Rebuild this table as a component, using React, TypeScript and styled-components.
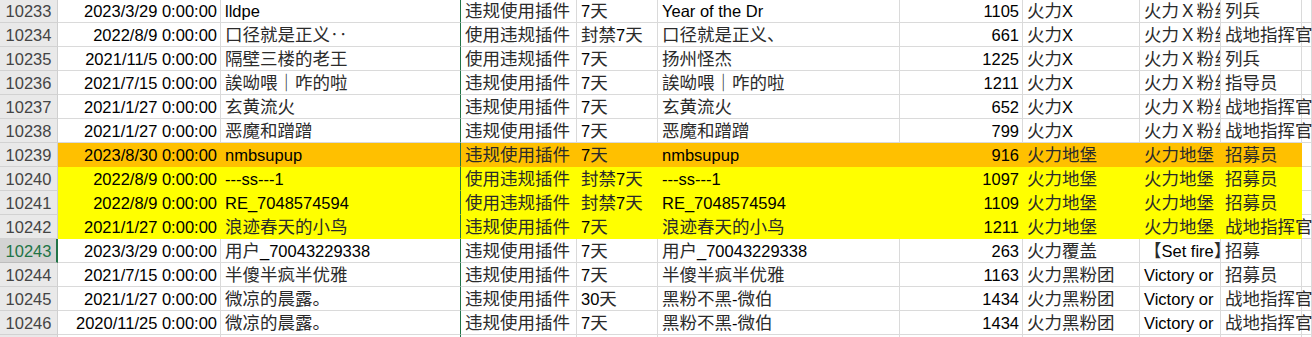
import React from 'react';
import styled, {createGlobalStyle} from 'styled-components';

const GlobalStyle = createGlobalStyle`
    html, body {
        margin: 0;
        padding: 0;
        background: #fff;
        overflow: hidden;
    }
    body {
        font-family: 'Liberation Sans', 'Noto Sans CJK SC', sans-serif;
        font-size: 16.5px;
        color: #000;
    }
`;

const GREEN = '#217346';
const GRID = '#dadada';
const COLUMNS = '58px 163px 240px 116px 81px 242px 123px 117px 81px 81px 1fr';

type Fill = 'orange' | 'yellow' | undefined;

const fillColor = (fill: Fill) => (fill === 'orange' ? '#ffc000' : fill === 'yellow' ? '#ffff00' : '#fff');

const Sheet = styled.div`
    display: flex;
    flex-direction: column;
    margin-top: -1px;
    height: 338px;
    overflow: hidden;
`;

const Row = styled.div`
    display: grid;
    grid-template-columns: ${COLUMNS};
    height: 24px;
    background: #fff;
`;

const RowHeader = styled.div<{$selected?: boolean}>`
    box-sizing: border-box;
    height: 24px;
    padding-top: 2px;
    line-height: 21px;
    text-align: center;
    color: ${(p) => (p.$selected ? GREEN : '#444')};
    background: ${(p) => (p.$selected ? '#d3d3d3' : '#e9e9e9')};
    border-bottom: 1px solid ${(p) => (p.$selected ? '#bdbdbd' : '#d2d2d2')};
    border-right: ${(p) => (p.$selected ? `2px solid ${GREEN}` : '1px solid #cfcfcf')};
    padding-left: ${(p) => (p.$selected ? '1px' : '0')};
`;

const Cell = styled.div<{$align?: 'left' | 'right'; $fill?: Fill; $edge?: string; $spill?: boolean; $blank?: boolean}>`
    box-sizing: border-box;
    min-width: 0;
    height: 24px;
    padding: 2px 3px 0 4px;
    line-height: 21px;
    white-space: nowrap;
    text-align: ${(p) => p.$align ?? 'left'};
    overflow: ${(p) => (p.$spill ? 'visible' : 'hidden')};
    background: ${(p) => (p.$blank ? 'transparent' : fillColor(p.$fill))};
    border-bottom: 1px solid ${(p) => (p.$fill ? fillColor(p.$fill) : GRID)};
    border-right: 1px solid ${(p) => p.$edge ?? (p.$fill ? fillColor(p.$fill) : GRID)};
    position: relative;
    z-index: ${(p) => (p.$spill ? 1 : 0)};
`;

const Han = styled.span`
    font-family: 'Noto Sans CJK SC', sans-serif;
    font-size: 17.5px;
    line-height: 1;
    color: #2b2b2b;
`;

const HAN_RUN = /([\u2025\u2E80-\u9FFF\uF900-\uFAFF\uFF00-\uFFEF]+)/;

function Text({value}: {value: string}) {
    const parts = value.split(HAN_RUN).filter(Boolean);
    return (
        <>
            {parts.map((part, i) => (HAN_RUN.test(part) ? <Han key={i}>{part}</Han> : <span key={i}>{part}</span>))}
        </>
    );
}

type Record = {
    id: number;
    date: string;
    user: string;
    reason: string;
    ban: string;
    nick: string;
    level: number | '';
    clan: string;
    group: string;
    rank: string;
    fill?: Fill;
    selected?: boolean;
};

const FANS = '火力Ｘ粉丝团';

const records: Record[] = [
    {id: 10233, date: '2023/3/29 0:00:00', user: 'lldpe', reason: '违规使用插件', ban: '7天', nick: 'Year of the Dr', level: 1105, clan: '火力X', group: FANS, rank: '列兵'},
    {id: 10234, date: '2022/8/9 0:00:00', user: '口径就是正义‥', reason: '使用违规插件', ban: '封禁7天', nick: '口径就是正义、', level: 661, clan: '火力X', group: FANS, rank: '战地指挥官'},
    {id: 10235, date: '2021/11/5 0:00:00', user: '隔壁三楼的老王', reason: '使用违规插件', ban: '7天', nick: '扬州怪杰', level: 1225, clan: '火力X', group: FANS, rank: '列兵'},
    {id: 10236, date: '2021/7/15 0:00:00', user: '誒呦喂｜咋的啦', reason: '违规使用插件', ban: '7天', nick: '誒呦喂｜咋的啦', level: 1211, clan: '火力X', group: FANS, rank: '指导员'},
    {id: 10237, date: '2021/1/27 0:00:00', user: '玄黄流火', reason: '违规使用插件', ban: '7天', nick: '玄黄流火', level: 652, clan: '火力X', group: FANS, rank: '战地指挥官'},
    {id: 10238, date: '2021/1/27 0:00:00', user: '恶魔和蹭蹭', reason: '违规使用插件', ban: '7天', nick: '恶魔和蹭蹭', level: 799, clan: '火力X', group: FANS, rank: '战地指挥官'},
    {id: 10239, date: '2023/8/30 0:00:00', user: 'nmbsupup', reason: '违规使用插件', ban: '7天', nick: 'nmbsupup', level: 916, clan: '火力地堡', group: '火力地堡', rank: '招募员', fill: 'orange'},
    {id: 10240, date: '2022/8/9 0:00:00', user: '---ss---1', reason: '使用违规插件', ban: '封禁7天', nick: '---ss---1', level: 1097, clan: '火力地堡', group: '火力地堡', rank: '招募员', fill: 'yellow'},
    {id: 10241, date: '2022/8/9 0:00:00', user: 'RE_7048574594', reason: '使用违规插件', ban: '封禁7天', nick: 'RE_7048574594', level: 1109, clan: '火力地堡', group: '火力地堡', rank: '招募员', fill: 'yellow'},
    {id: 10242, date: '2021/1/27 0:00:00', user: '浪迹春天的小鸟', reason: '违规使用插件', ban: '7天', nick: '浪迹春天的小鸟', level: 1211, clan: '火力地堡', group: '火力地堡', rank: '战地指挥官', fill: 'yellow'},
    {id: 10243, date: '2023/3/29 0:00:00', user: '用户_70043229338', reason: '违规使用插件', ban: '7天', nick: '用户_70043229338', level: 263, clan: '火力覆盖', group: '【Set fire】', rank: '招募', selected: true},
    {id: 10244, date: '2021/7/15 0:00:00', user: '半傻半疯半优雅', reason: '违规使用插件', ban: '7天', nick: '半傻半疯半优雅', level: 1163, clan: '火力黑粉团', group: 'Victory or', rank: '招募员'},
    {id: 10245, date: '2021/1/27 0:00:00', user: '微凉的晨露。', reason: '违规使用插件', ban: '30天', nick: '黑粉不黑-微伯', level: 1434, clan: '火力黑粉团', group: 'Victory or', rank: '战地指挥官'},
    {id: 10246, date: '2020/11/25 0:00:00', user: '微凉的晨露。', reason: '违规使用插件', ban: '7天', nick: '黑粉不黑-微伯', level: 1434, clan: '火力黑粉团', group: 'Victory or', rank: '战地指挥官'},
    {id: 10247, date: '', user: '', reason: '', ban: '', nick: '', level: '', clan: '', group: '', rank: ''},
];

function SheetRow({r}: {r: Record}) {
    const f = r.fill;
    return (
        <Row>
            <RowHeader $selected={r.selected}>{r.id}</RowHeader>
            <Cell $fill={f} $align="right">{r.date}</Cell>
            <Cell $fill={f} $edge={GREEN}><Text value={r.user} /></Cell>
            <Cell $fill={f}><Text value={r.reason} /></Cell>
            <Cell $fill={f}><Text value={r.ban} /></Cell>
            <Cell $fill={f}><Text value={r.nick} /></Cell>
            <Cell $fill={f} $align="right">{r.level}</Cell>
            <Cell $fill={f}><Text value={r.clan} /></Cell>
            <Cell $fill={f}><Text value={r.group} /></Cell>
            <Cell $fill={f} $spill><Text value={r.rank} /></Cell>
            <Cell $blank />
        </Row>
    );
}

export default function App() {
    return (
        <>
            <GlobalStyle />
            <Sheet>
                {records.map((r) => (
                    <SheetRow key={r.id} r={r} />
                ))}
            </Sheet>
        </>
    );
}
